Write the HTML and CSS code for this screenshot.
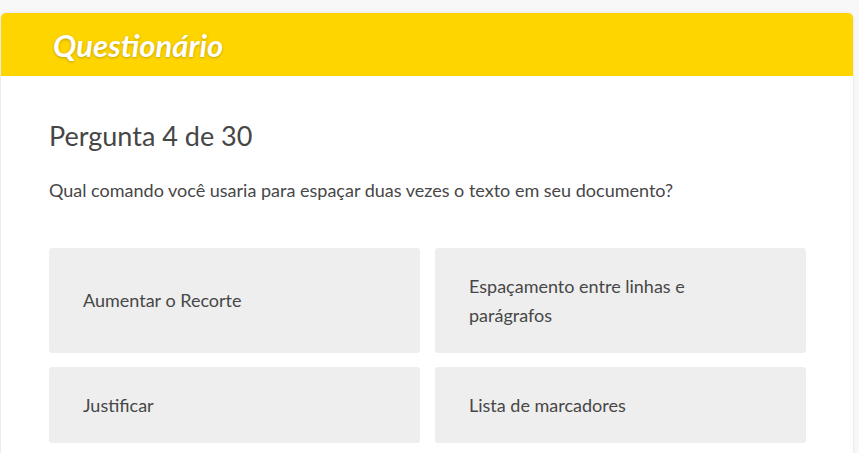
FILE: index.html
```html
<!DOCTYPE html>
<html lang="pt">
<head>
<meta charset="utf-8">
<link rel="stylesheet" href="styles.css">
</head>
<body>
<div class="page">
  <div class="card">
    <header class="card-header">
      <h1 class="title">Questionário</h1>
    </header>
    <main class="card-body">
      <h2 class="counter">Pergunta 4 de 30</h2>
      <p class="question">Qual comando você usaria para espaçar duas vezes o texto em seu documento?</p>
      <div class="options">
        <div class="option">Aumentar o Recorte</div>
        <div class="option">Espaçamento entre linhas e parágrafos</div>
        <div class="option">Justificar</div>
        <div class="option">Lista de marcadores</div>
      </div>
    </main>
  </div>
</div>
</body>
</html>
```

FILE: styles.css
```css
html, body {
  margin: 0;
  padding: 0;
  background: #f8f8f8;
  height: 100%;
  overflow: hidden;
}
body {
  font-family: "Lato", "Noto Sans", sans-serif;
  color: #474747;
}
.page {
  padding: 13px 6px 0 1px;
}
.card {
  background: #ffffff;
  border-radius: 5px;
  box-shadow: 0 0 3px rgba(0,0,0,0.12);
  overflow: hidden;
  height: 460px;
}
.card-header {
  background: #ffd500;
  height: 63px;
  display: flex;
  align-items: center;
  padding: 0 50px 0 52px;
}
.title {
  margin: 0;
  font-size: 31px;
  line-height: 36px;
  font-weight: 700;
  font-style: italic;
  color: #ffffff;
  text-shadow: 0 1px 3px rgba(0,0,0,0.25);
}
.card-body {
  padding: 40px 47px 0 48px;
}
.counter {
  margin: 0;
  font-size: 27px;
  font-weight: 400;
  line-height: 40px;
  color: #464646;
}
.question {
  margin: 22px 0 0;
  font-size: 18px;
  line-height: 24px;
  color: #474747;
}
.options {
  margin-top: 46px;
  display: grid;
  grid-template-columns: 1fr 1fr;
  gap: 14px 15px;
}
.option {
  background: #eeeeee;
  border-radius: 3px;
  padding: 23.5px 90px 23.5px 34px;
  font-size: 18px;
  line-height: 29px;
  color: #474747;
  display: flex;
  align-items: center;
}
```
